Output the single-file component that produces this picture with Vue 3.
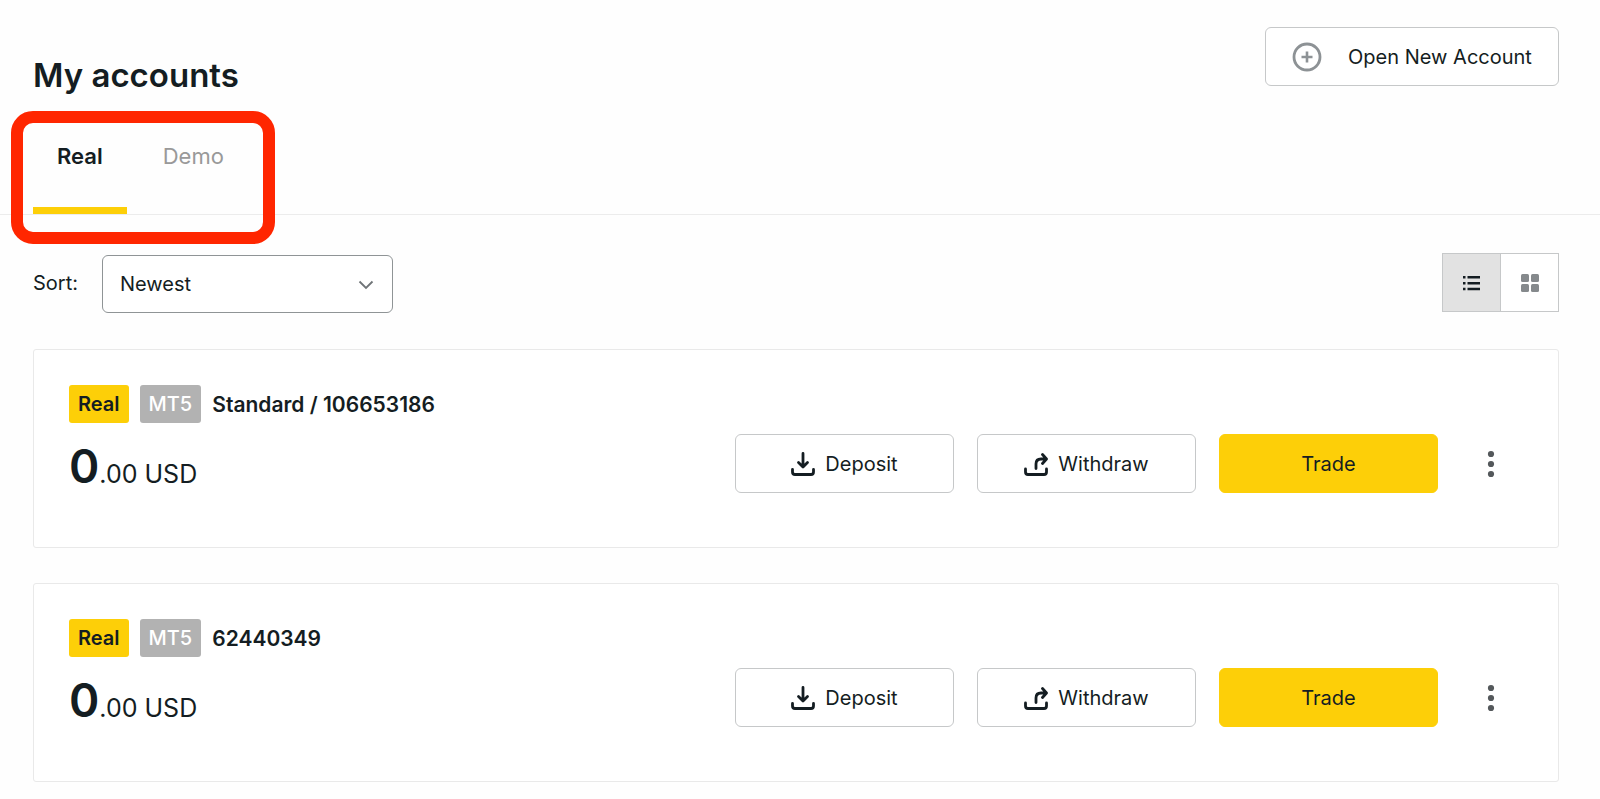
<template>
  <main class="page">
    <header class="top">
      <h1>My accounts</h1>
      <button type="button" class="btn open-btn">
        <svg width="30" height="30" viewBox="0 0 30 30" fill="none" stroke="#8d9295">
          <circle cx="15" cy="15" r="13" stroke-width="2.8" />
          <path d="M15 9.500v11M9.500 15h11" stroke-width="2.6" />
        </svg>
        Open New Account
      </button>
    </header>

    <nav class="tabs">
      <div class="tab-list">
        <button
          v-for="tab in tabs"
          :key="tab"
          type="button"
          class="tab"
          :class="{ active: tab === activeTab }"
          @click="activeTab = tab"
        >
          {{ tab }}
        </button>
        <span class="highlight"></span>
      </div>
    </nav>

    <div class="toolbar">
      <div class="sort">
        <label for="sort">Sort:</label>
        <div class="select-wrap">
          <select id="sort" v-model="sort">
            <option>Newest</option>
            <option>Oldest</option>
          </select>
          <svg class="chevron" width="16" height="10" viewBox="0 0 16 10" fill="none" stroke="#6f7477" stroke-width="1.8">
            <path d="M1.500 1.500L8 8l6.500-6.500" />
          </svg>
        </div>
      </div>

      <div class="views">
        <button type="button" aria-label="List view" :class="{ on: view === 'list' }" @click="view = 'list'">
          <svg width="18" height="16" viewBox="0 0 18 16" fill="#141d22">
            <path d="M0 1h2.500v2.500H0zM0 7h2.500v2.500H0zM0 12.700h2.500v2.500H0zM4.500 1H17v2.500H4.500zM4.500 7H17v2.500H4.500zM4.500 12.700H17v2.500H4.500z" />
          </svg>
        </button>
        <button type="button" aria-label="Grid view" :class="{ on: view === 'grid' }" @click="view = 'grid'">
          <svg width="18" height="18" viewBox="0 0 18 18" fill="#85898c">
            <rect width="8" height="8" rx="1.5" />
            <rect x="10" width="8" height="8" rx="1.5" />
            <rect y="10" width="8" height="8" rx="1.5" />
            <rect x="10" y="10" width="8" height="8" rx="1.5" />
          </svg>
        </button>
      </div>
    </div>

    <section v-for="account in accounts" :key="account.id" class="card">
      <div class="info">
        <div class="name">
          <span class="badge real">Real</span>
          <span class="badge platform">MT5</span>
          <strong>{{ account.name }}</strong>
        </div>
        <div class="balance"><b>0</b>.00 USD</div>
      </div>
      <div class="actions">
        <button type="button" class="btn">
          <svg width="24" height="24" viewBox="0 0 24 24" fill="none" stroke="#141d22" stroke-width="2.8" stroke-linecap="round" stroke-linejoin="round">
            <path d="M12 1.500v13M7.500 10.500l4.500 4.500 4.500-4.500" />
            <path d="M1.500 17.500v2.500q0 2.500 2.500 2.500h16q2.500 0 2.500-2.500v-2.500" />
          </svg>
          Deposit
        </button>
        <button type="button" class="btn">
          <svg width="24" height="24" viewBox="0 0 24 24" fill="none" stroke="#141d22" stroke-width="2.8" stroke-linecap="round" stroke-linejoin="round">
            <path d="M12 16.500v-4.500q0-5 5-5h5M18.500 2.500l4 4.500-4 4.500" />
            <path d="M1.500 17v3q0 2.500 2.500 2.500h16q2.500 0 2.500-2.500v-3" />
          </svg>
          Withdraw
        </button>
        <button type="button" class="btn trade">Trade</button>
        <button type="button" class="more" aria-label="More">
          <svg width="8" height="28" viewBox="0 0 8 28" fill="#54585b">
            <circle cx="4" cy="4" r="3.1" />
            <circle cx="4" cy="14" r="3.1" />
            <circle cx="4" cy="24" r="3.1" />
          </svg>
        </button>
      </div>
    </section>
  </main>
</template>

<script setup>
import { ref } from 'vue'

const tabs = ['Real', 'Demo']
const activeTab = ref('Real')
const sort = ref('Newest')
const view = ref('list')

const accounts = ref([
  { id: 1, name: 'Standard / 106653186' },
  { id: 2, name: '62440349' }
])
</script>

<style>
body {
  margin: 0;
  background: #fefefe;
}
</style>

<style scoped>
.page {
  font-family: Inter, "Liberation Sans", sans-serif;
  font-size: 20px;
  color: #141d22;
  padding-bottom: 16px;
}
button, select {
  font: inherit;
  color: inherit;
  cursor: pointer;
}
svg {
  flex: none;
}

.top {
  display: flex;
  justify-content: space-between;
  align-items: flex-start;
  padding: 27px 41px 0 33px;
}
h1 {
  margin: 24px 0 0;
  font-size: 33px;
  line-height: 48px;
  font-weight: 600;
}
.btn {
  display: flex;
  align-items: center;
  justify-content: center;
  gap: 10px;
  box-sizing: border-box;
  width: 219px;
  height: 59px;
  padding: 0;
  background: #fff;
  border: 1px solid #c6c8c9;
  border-radius: 6px;
}
.open-btn {
  width: 294px;
  gap: 26px;
}

.tabs {
  padding-left: 33px;
  border-bottom: 1px solid #ececec;
}
.tab-list {
  position: relative;
  display: flex;
  gap: 12px;
  width: max-content;
}
.tab {
  height: 115px;
  padding: 6px 24px 0;
  font-size: 22px;
  color: #999;
  background: none;
  border: 0;
  border-bottom: 7px solid transparent;
}
.tab.active {
  color: #141d22;
  font-weight: 600;
  border-bottom-color: #fdcf08;
}
/* red frame round the tabs */
.highlight {
  position: absolute;
  top: 12px;
  bottom: -30px;
  left: -22px;
  right: -27px;
  border: 12px solid #ff2600;
  border-radius: 22px;
  pointer-events: none;
}

.toolbar {
  display: flex;
  justify-content: space-between;
  align-items: center;
  padding: 37px 41px 0 33px;
}
.sort {
  display: flex;
  align-items: center;
  gap: 24px;
}
.select-wrap {
  position: relative;
  margin-top: 3px;
}
select {
  display: block;
  appearance: none;
  width: 291px;
  height: 58px;
  padding: 0 17px;
  background: #fff;
  border: 1px solid #8f9496;
  border-radius: 6px;
}
.chevron {
  position: absolute;
  right: 19px;
  top: 25px;
  pointer-events: none;
}
.views {
  display: flex;
  border: 1px solid #c6c8c9;
}
.views button {
  display: flex;
  align-items: center;
  justify-content: center;
  box-sizing: content-box;
  width: 57px;
  height: 57px;
  padding: 0;
  border: 0;
  background: #fff;
}
.views button:first-child {
  border-right: 1px solid #c6c8c9;
}
.views .on {
  background: #e2e2e2;
}

.card {
  display: flex;
  justify-content: space-between;
  align-items: flex-start;
  box-sizing: border-box;
  min-height: 199px;
  margin: 35px 41px 0 33px;
  padding: 35px 47px 35px 35px;
  background: #fff;
  border: 1px solid #e9e9e9;
  border-radius: 3px;
}
.toolbar + .card {
  margin-top: 36px;
}
.name {
  display: flex;
  align-items: center;
  gap: 11px;
}
.name strong {
  font-size: 21px;
  font-weight: 600;
}
.badge {
  padding: 0 9px;
  line-height: 38px;
  border-radius: 3px;
}
.badge.real {
  background: #fdcf08;
  font-weight: 600;
}
.badge.platform {
  background: #b2b2b2;
  color: #fff;
  font-weight: 500;
}
.balance {
  margin-top: 15px;
  font-size: 25px;
  line-height: 56px;
}
.balance b {
  font-size: 46px;
  font-weight: 600;
}
.actions {
  display: flex;
  align-items: center;
  gap: 23px;
  margin-top: 49px;
}
.trade {
  background: #fdcf08;
  border-color: #fdcf08;
}
.more {
  display: flex;
  justify-content: center;
  width: 40px;
  margin-left: 10px;
  padding: 8px 0;
  background: none;
  border: 0;
}
</style>
